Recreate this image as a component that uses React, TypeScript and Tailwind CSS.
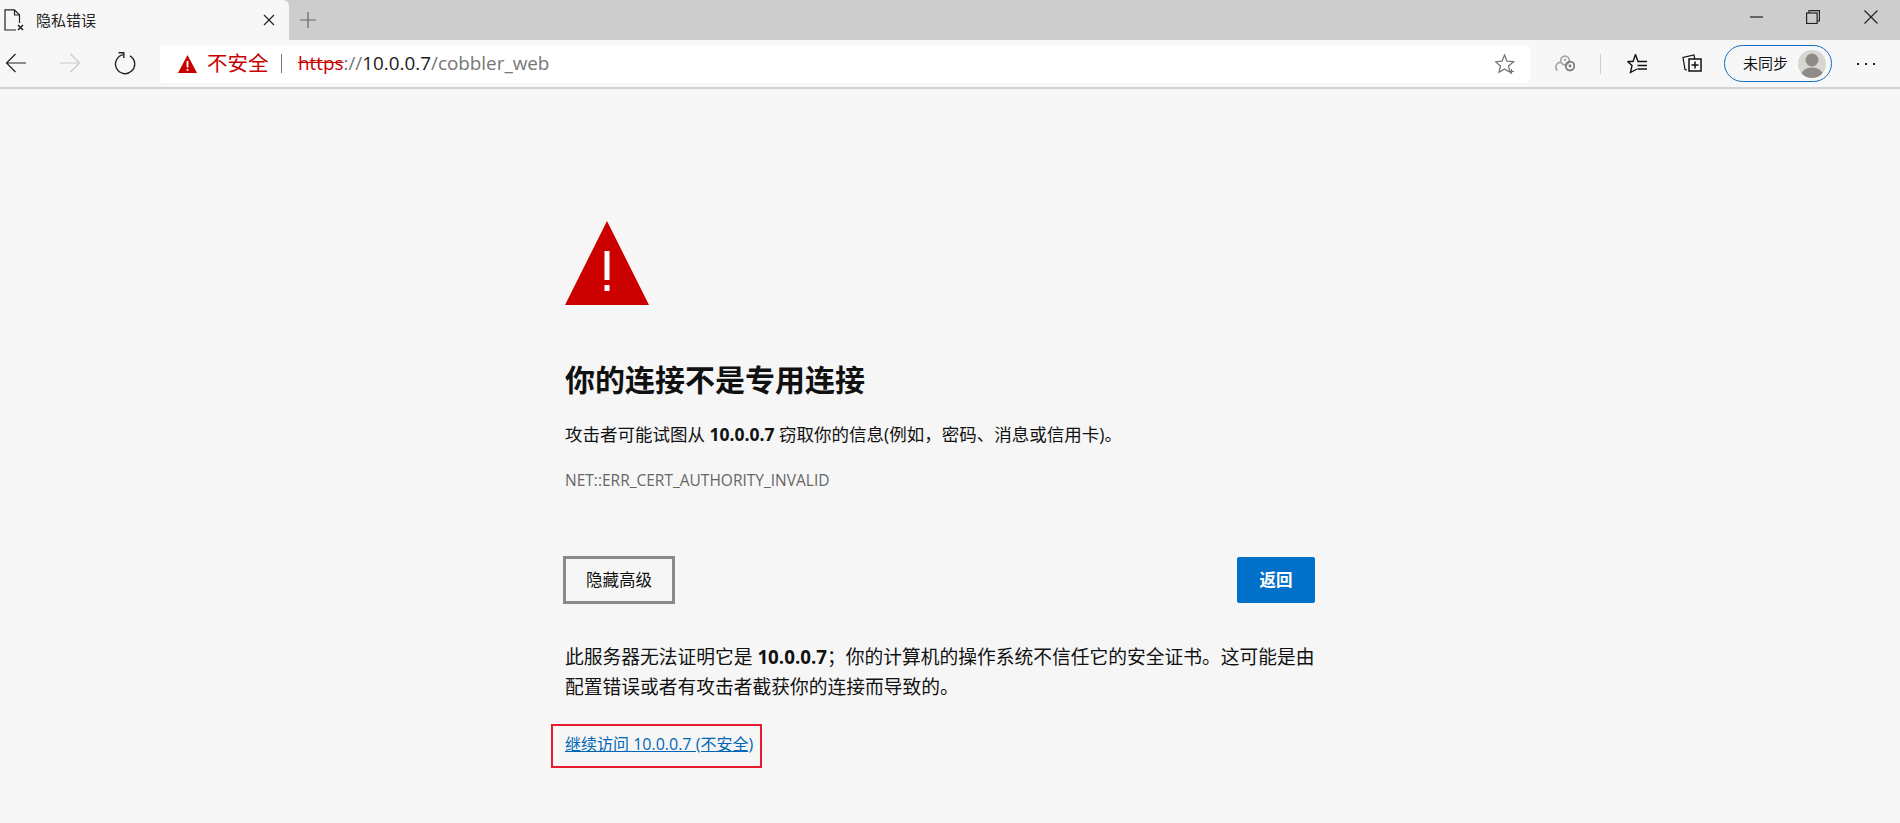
import React from "react";

const cjk = "font-['Open_Sans','Noto_Sans_CJK_SC',sans-serif]";

function Stroke({ w, h, children, className = "" }: { w: number; h: number; children: React.ReactNode; className?: string }) {
  return (
    <svg width={w} height={h} viewBox={`0 0 ${w} ${h}`} fill="none" stroke="currentColor" strokeWidth={1.2} className={`shrink-0 ${className}`}>
      {children}
    </svg>
  );
}

function Toolbar() {
  return (
    <div className="flex h-[47px] items-center bg-[#f7f7f7]">
      <div className="-mt-[1px] flex w-[160px] shrink-0 items-center pl-[5px]">
        <Stroke w={22} h={20} className="text-[#222]">
          <path d="M1.5 10H21M10.5 1L1.5 10L10.5 19" />
        </Stroke>
        <Stroke w={22} h={20} className="ml-[32px] text-[#c9c9c9]">
          <path d="M1 10H20.5M11.5 1L20.5 10L11.5 19" />
        </Stroke>
        <Stroke w={22} h={24} className="ml-[33px] text-[#222]">
          <path d="M9.5 3.6A9.6 9.6 0 1 0 16 4.8" strokeWidth="1.4" />
          <path d="M4.5 1.8H9.8V7" strokeWidth="1.4" />
        </Stroke>
      </div>
      <div className="flex h-[38px] w-[1370px] shrink-0 items-center rounded-[4px] bg-white pl-[18px] pr-[13px]">
        <svg width="19" height="18" viewBox="0 0 19 18" className="shrink-0">
          <path d="M9.5 0L19 18H0Z" fill="#c80000" />
          <rect x="8.6" y="6" width="1.8" height="6.5" fill="#fff" />
          <rect x="8.6" y="14" width="1.8" height="1.8" fill="#fff" />
        </svg>
        <span className="ml-[10px] w-[62px] whitespace-nowrap text-[20.5px] text-[#c80000]">不安全</span>
        <span className="ml-[12px] h-[19px] w-[1px] bg-[#777]" />
        <span className="ml-[16px] whitespace-nowrap text-[18.85px] leading-none text-[#767676]">
          <span className="text-[#c80000] line-through">https</span>://<span className="text-[#1a1a1a]">10.0.0.7</span>/cobbler_web
        </span>
        <Stroke w={22} h={22} className="ml-auto text-[#6f6f6f]">
          <path d="M9.5 2L12 8.2L18.6 8.7L13.5 13L15 19.3L9.5 15.9L4 19.3L5.5 13L0.5 8.7L7 8.2Z" />
          <path d="M16.5 16V21M14 18.5H19" />
        </Stroke>
      </div>
      <div className="ml-[25px] flex w-[20px] shrink-0 items-center justify-center text-[#a8a8a8]">
        <Stroke w={20} h={17}>
          <path d="M2.5 15.5A4.2 4.2 0 0 1 1 11.5A4.3 4.3 0 0 1 6 7.5" strokeWidth="1.7" />
          <circle cx="10" cy="5.5" r="4.3" strokeWidth="1.7" />
          <circle cx="15" cy="11" r="4.3" strokeWidth="1.7" stroke="#777" />
          <circle cx="15" cy="11" r="1.4" fill="#777" stroke="none" />
          <circle cx="10" cy="5" r="1.2" fill="currentColor" stroke="none" />
        </Stroke>
      </div>
      <span className="ml-[25px] h-[20px] w-[1px] bg-[#cfcfcf]" />
      <Stroke w={20} h={20} className="ml-[26px] text-[#111]">
        <path d="M0.5 7.5H6L8.5 0.5L11 7.5H20M0.5 7.5L5 11.5L3.5 18.5L10 15" strokeWidth="1.4" />
        <path d="M10.5 11.5H20M10.5 15H20" strokeWidth="1.4" />
      </Stroke>
      <Stroke w={20} h={20} className="ml-[35px] text-[#111]">
        <path d="M5 16L3 15.5L1 3.5L12 1L12.7 5" />
        <rect x="7" y="5" width="12" height="12" strokeWidth="1.5" />
        <path d="M13 7.5V14.5M9.5 11H16.5" strokeWidth="1.5" />
      </Stroke>
      <div className="ml-[22px] flex h-[37px] w-[108px] shrink-0 items-center rounded-full border-[1.5px] border-[#106ebe] pl-[18px]">
        <span className="w-[45px] whitespace-nowrap text-[15px] text-[#111]">未同步</span>
        <span className="ml-[10px] flex h-[28px] w-[28px] items-center justify-center overflow-hidden rounded-full bg-[#d8d6d2]">
          <svg width="28" height="28" viewBox="0 0 28 28">
            <circle cx="14" cy="10" r="6.5" fill="#8f8c87" />
            <ellipse cx="14" cy="25" rx="11" ry="7.5" fill="#8f8c87" />
          </svg>
        </span>
      </div>
      <div className="ml-[25px] flex gap-[6px]">
        <span className="h-[2px] w-[2px] bg-[#222]" />
        <span className="h-[2px] w-[2px] bg-[#222]" />
        <span className="h-[2px] w-[2px] bg-[#222]" />
      </div>
    </div>
  );
}

function TabStrip() {
  return (
    <div className="flex h-[40px] items-center bg-[#cdcdcd]">
      <div className="flex h-[40px] w-[289px] shrink-0 items-center rounded-tr-[6px] bg-[#f7f7f7] pl-[4px]">
        <svg width="20" height="22" viewBox="0 0 20 22" fill="none" stroke="#222" strokeWidth="1.2" className="shrink-0">
          <path d="M12 21H1V0.9H10.5L15.5 6V14" />
          <path d="M10.5 1V6H15.5" />
          <path d="M14 16L19 21M19 16L14 21" strokeWidth="1.6" />
        </svg>
        <span className="ml-[12px] w-[61px] whitespace-nowrap text-[15px] text-[#222]">隐私错误</span>
        <Stroke w={12} h={12} className="ml-[166px] text-[#222]">
          <path d="M1 1L11 11M11 1L1 11" />
        </Stroke>
      </div>
      <Stroke w={16} h={16} className="ml-[11px] text-[#666]">
        <path d="M8 0V16M0 8H16" />
      </Stroke>
      <Stroke w={13} h={2} className="ml-[1434px] -mt-[6px] text-[#222]">
        <path d="M0 1H13" />
      </Stroke>
      <Stroke w={14} h={14} className="ml-[43px] -mt-[6px] text-[#222]">
        <rect x="0.6" y="3" width="10.5" height="10.5" />
        <path d="M3 3V0.6H13.4V11H11" />
      </Stroke>
      <Stroke w={14} h={14} className="ml-[44px] -mt-[6px] text-[#222]">
        <path d="M0.5 0.5L13.5 13.5M13.5 0.5L0.5 13.5" />
      </Stroke>
    </div>
  );
}

export default function App() {
  return (
    <div className={`flex h-[823px] w-[1900px] flex-col overflow-hidden bg-[#f6f6f6] ${cjk}`}>
      <TabStrip />
      <Toolbar />
      <div className="h-[2px] bg-[#d2d2d2]" />
      <main className="ml-[565px] w-[750px] pt-[132px]">
        <svg width="84" height="84" viewBox="0 0 84 84" className="block">
          <path d="M42 0L84 84H0Z" fill="#cd0000" />
          <rect x="39.5" y="30" width="5" height="29" fill="#fff" />
          <rect x="39.5" y="64" width="5" height="6" fill="#fff" />
        </svg>
        <h1 className="mt-[55px] text-[30px] font-bold leading-[40px] text-[#111]">你的连接不是专用连接</h1>
        <p className="mt-[21px] text-[17.5px] leading-[26px] text-[#111]">
          攻击者可能试图从 <b>10.0.0.7</b> 窃取你的信息(例如，密码、消息或信用卡)。
        </p>
        <p className="mt-[23px] text-[15.5px] leading-[20px] text-[#666]">NET::ERR_CERT_AUTHORITY_INVALID</p>
        <div className="mt-[66px] flex items-center justify-between">
          <button className="-ml-[2px] h-[48px] w-[112px] border-[3px] border-[#8a8a8a] text-[16.5px] text-[#111]">隐藏高级</button>
          <button className="h-[46px] w-[78px] rounded-[2px] bg-[#0070c9] text-[16.5px] font-bold text-white">返回</button>
        </div>
        <p className="mt-[38px] text-[18.75px] leading-[30px] text-[#111]">
          此服务器无法证明它是 <b>10.0.0.7</b>；你的计算机的操作系统不信任它的安全证书。这可能是由配置错误或者有攻击者截获你的连接而导致的。
        </p>
        <div className="-ml-[14px] mt-[22px] inline-block border-2 border-[#e81c2e] pb-[10px] pl-[12px] pr-[7px] pt-[6px]">
          <a className="block whitespace-nowrap text-[16px] leading-[24px] text-[#0067b8] underline">继续访问 10.0.0.7 (不安全)</a>
        </div>
      </main>
    </div>
  );
}
